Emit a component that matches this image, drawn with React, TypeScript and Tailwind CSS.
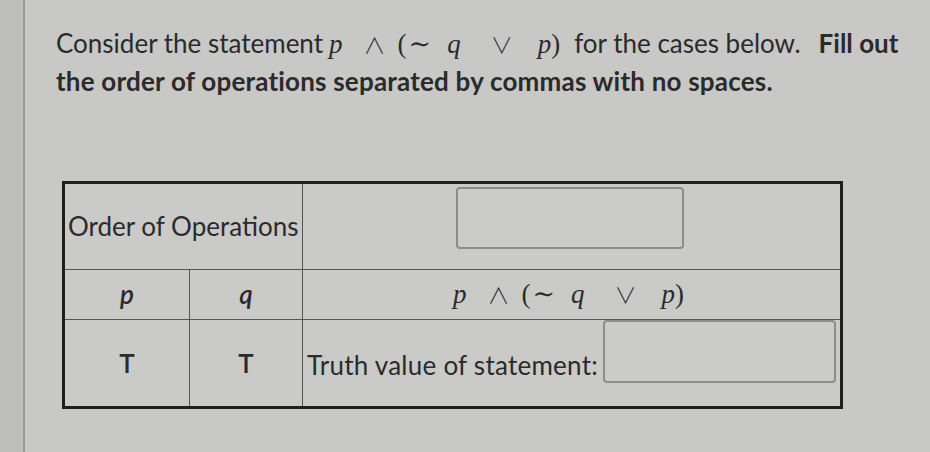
import React from "react";

const serif = { fontFamily: '"Liberation Serif", "DejaVu Serif", serif' };
const opFont = { fontFamily: '"Noto Sans CJK JP", "DejaVu Serif", serif' };

function Formula({ className = "" }: { className?: string }) {
  return (
    <span className={`italic text-[27px] ${className}`} style={serif}>
      <span>p</span>
      <span className="not-italic ml-[21px] text-[22px] leading-none font-light" style={opFont}>∧</span>
      <span className="not-italic ml-[12px]">(</span>
      <span className="not-italic ml-[2px]">∼</span>
      <span className="ml-[16px]">q</span>
      <span className="not-italic ml-[30px] text-[22px] leading-none font-light" style={opFont}>∨</span>
      <span className="ml-[25px]">p</span>
      <span className="not-italic">)</span>
    </span>
  );
}

export default function App() {
  return (
    <div
      className="w-[930px] h-[452px] overflow-hidden flex bg-[#c8c8c7] text-[#2b2b2b]"
      style={{ fontFamily: 'Lato, "Open Sans", sans-serif' }}
    >
      <div className="w-[25px] h-full bg-[#bdbdbc] border-r-2 border-[#9a9a99] shrink-0" />
      <div className="flex-1 flex flex-col pl-[31px] pt-[24px]">
        <div className="text-[26px] leading-[38px]">
          <div className="flex items-baseline whitespace-nowrap h-[38px]">
            <span>Consider the statement</span>
            <Formula className="ml-[6px]" />
            <span className="ml-[14px]">for the cases below.</span>
            <span className="ml-[18px] font-bold">Fill out</span>
          </div>
          <div className="font-bold whitespace-nowrap tracking-[0.2px]">
            the order of operations separated by commas with no spaces.
          </div>
        </div>

        <div className="mt-[81px] ml-[6px] w-[781px] border-[3px] border-[#1f1f1f] bg-[#cacac9] text-[26px]">
          <div className="flex h-[86px] border-b border-[#555]">
            <div className="w-[238px] border-r border-[#555] flex items-center pl-[3px] whitespace-nowrap">
              Order of Operations
            </div>
            <div className="flex-1 flex justify-center items-start pt-[3px] pr-[4px]">
              <div className="w-[228px] h-[62px] rounded-[4px] border-2 border-[#8d8d8c] bg-[#cbcbca]" />
            </div>
          </div>
          <div className="flex h-[50px] border-b border-[#555]">
            <div className="w-[125px] border-r border-[#555] flex items-center justify-center">
              <span className="italic font-semibold">p</span>
            </div>
            <div className="w-[113px] border-r border-[#555] flex items-center justify-center">
              <span className="italic font-semibold">q</span>
            </div>
            <div className="flex-1 flex items-center justify-center pr-[6px]">
              <Formula />
            </div>
          </div>
          <div className="flex h-[86px]">
            <div className="w-[125px] border-r border-[#555] flex items-center justify-center">
              <span className="font-semibold">T</span>
            </div>
            <div className="w-[113px] border-r border-[#555] flex items-center justify-center">
              <span className="font-semibold">T</span>
            </div>
            <div className="flex-1 flex items-start">
              <span className="ml-[4px] mt-[26px] whitespace-nowrap tracking-[0.25px]">Truth value of statement:</span>
              <div className="ml-auto mr-[4px] w-[233px] h-[63px] rounded-[4px] border-2 border-[#8d8d8c] bg-[#cbcbca]" />
            </div>
          </div>
        </div>
      </div>
    </div>
  );
}
